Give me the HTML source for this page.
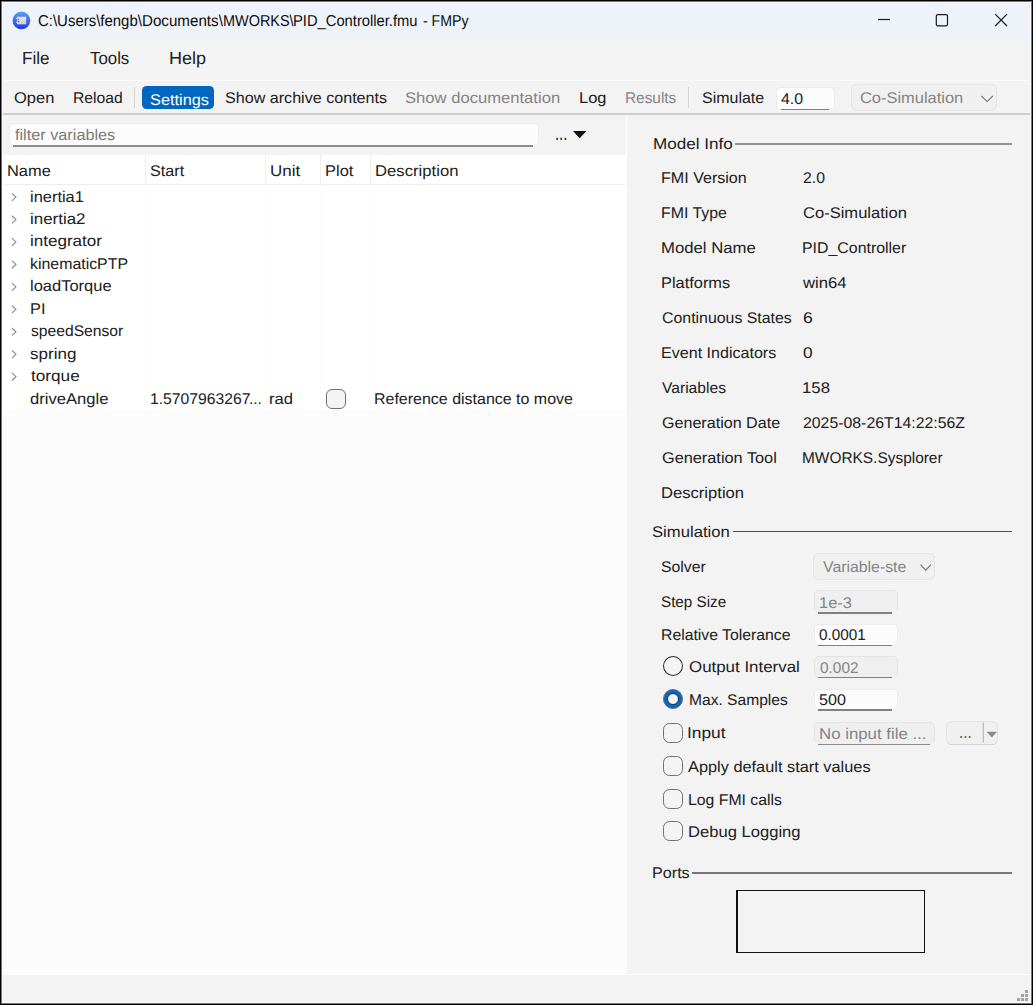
<!DOCTYPE html>
<html><head><meta charset="utf-8"><title>FMPy</title>
<style>
html,body{margin:0;padding:0}
body{width:1033px;height:1005px;position:relative;overflow:hidden;background:#f3f3f3;font-family:"Liberation Sans",sans-serif;color:#202020}
.a{position:absolute;box-sizing:border-box}
.t{position:absolute;white-space:pre;line-height:1;transform-origin:0 0;text-rendering:geometricPrecision}
.inp{position:absolute;box-sizing:border-box;border:1px solid #ececec;border-bottom:none;border-radius:5px;background:#fcfcfc}
.inp:after{content:"";position:absolute;left:3.3px;right:4.3px;bottom:-1.5px;height:1.5px;background:#808080}
.inp.thin:after{height:1.1px;bottom:-1.1px;background:#8a8a8a}
.inp.filt:after{height:1.7px;bottom:-1.7px;background:#8a8a8a}
.inp.dis{background:#efefef;border-color:#e4e4e4}
.cmb{position:absolute;box-sizing:border-box;border:1px solid #e5e5e5;border-radius:5.5px;background:#f0f0f0}
.cb{position:absolute;box-sizing:border-box;width:20.4px;height:20.3px;border:1.4px solid #707070;border-radius:6.5px;background:#f4f4f4}
.rb{position:absolute;box-sizing:border-box;width:20px;height:20.2px;border:1.4px solid #2c2c2c;border-radius:50%;background:#f4f4f4}
.hl{position:absolute;height:2px;background:#8e8e8e}
svg{position:absolute;overflow:visible}
</style></head><body>
<!-- title bar -->
<div class="a" style="left:0;top:0;width:1033px;height:39px;background:#eef3fa"></div>
<svg style="left:0;top:0" width="40" height="40" viewBox="0 0 40 40">
<defs><linearGradient id="g" x1="0" y1="0" x2="0" y2="1"><stop offset="0" stop-color="#5e9ff8"/><stop offset="0.5" stop-color="#3f6ef2"/><stop offset="1" stop-color="#2036ec"/></linearGradient>
<linearGradient id="g2" x1="0" y1="0" x2="0" y2="1"><stop offset="0" stop-color="#ebe9e3"/><stop offset="1" stop-color="#cdcdcd"/></linearGradient></defs>
<circle cx="21.4" cy="20.45" r="9.3" fill="#f6f7f9" opacity="0.7"/>
<circle cx="21.4" cy="20.45" r="8.85" fill="url(#g)"/>
<rect x="17.3" y="17" width="8.6" height="7" fill="url(#g2)" stroke="#efe9dc" stroke-width="0.5"/>
<rect x="16" y="18" width="2" height="0.9" fill="#dfe5f6"/><rect x="16" y="21.8" width="2" height="0.9" fill="#dfe5f6"/>
<circle cx="18.5" cy="19.3" r="0.8" fill="#3b5fe6"/><circle cx="18.5" cy="21.6" r="0.8" fill="#3b5fe6"/>
</svg>
<!-- window controls -->
<svg style="left:0;top:0" width="1033" height="40" fill="none" stroke="#1a1a1a" stroke-width="1.2">
<path d="M878 19.5H890"/>
<rect x="936.3" y="14.6" width="11.2" height="11.2" rx="1.6"/>
<path d="M995.2 14.2L1007 26M1007 14.2L995.2 26"/>
</svg>
<!-- menu/toolbar separator lines -->
<div class="a" style="left:0;top:80px;width:1033px;height:1px;background:#fafafa"></div>
<div class="a" style="left:0;top:113px;width:1033px;height:2px;background:#cdcdcd"></div>
<div class="a" style="left:134px;top:87px;width:1px;height:21px;background:#d6d6d6"></div>
<div class="a" style="left:688px;top:87px;width:1px;height:21px;background:#d6d6d6"></div>
<div class="a" style="left:141.9px;top:86.3px;width:72.6px;height:22.6px;background:#0067c0;border-radius:4.5px;box-shadow:0 0 0 1px #f8f5f3"></div>
<div class="inp" style="left:776.4px;top:87.3px;width:58.4px;height:21.4px"></div>
<div class="cmb" style="left:851px;top:84px;width:146px;height:27px"></div>
<svg style="left:981px;top:95px" width="13" height="8" fill="none" stroke="#767676" stroke-width="1.1"><path d="M0.4 1L6.1 6.6L11.8 1"/></svg>
<!-- left pane -->
<div class="a" style="left:2px;top:155px;width:624px;height:819px;background:#fcfcfc"></div>
<div class="a" style="left:2px;top:155px;width:625px;height:255px;background:#ffffff"></div>
<div class="inp filt" style="left:8.5px;top:123.3px;width:530px;height:21.8px"></div>
<svg style="left:0;top:0" width="640" height="160"><path d="M573 131H586.4L579.7 138.2Z" fill="#111"/></svg>
<div class="a" style="left:145px;top:185px;width:1px;height:225px;background:#fbfbfb"></div>
<div class="a" style="left:265px;top:185px;width:1px;height:225px;background:#fbfbfb"></div>
<div class="a" style="left:320px;top:185px;width:1px;height:225px;background:#fbfbfb"></div>
<div class="a" style="left:370px;top:185px;width:1px;height:225px;background:#fbfbfb"></div>
<div class="a" style="left:2px;top:184px;width:623px;height:1px;background:#eeeeee"></div>
<div class="a" style="left:145px;top:155px;width:1px;height:29px;background:#eeeeee"></div>
<div class="a" style="left:265px;top:155px;width:1px;height:29px;background:#eeeeee"></div>
<div class="a" style="left:320px;top:155px;width:1px;height:29px;background:#eeeeee"></div>
<div class="a" style="left:370px;top:155px;width:1px;height:29px;background:#eeeeee"></div>
<svg style="left:0;top:0" width="40" height="420" fill="none" stroke="#8a8a8a" stroke-width="1.1">
<path d="M11.9 193.30L16.0 197.10L11.9 200.90"/>
<path d="M11.9 215.75L16.0 219.55L11.9 223.35"/>
<path d="M11.9 238.20L16.0 242.00L11.9 245.80"/>
<path d="M11.9 260.65L16.0 264.45L11.9 268.25"/>
<path d="M11.9 283.10L16.0 286.90L11.9 290.70"/>
<path d="M11.9 305.55L16.0 309.35L11.9 313.15"/>
<path d="M11.9 328.00L16.0 331.80L11.9 335.60"/>
<path d="M11.9 350.45L16.0 354.25L11.9 358.05"/>
<path d="M11.9 372.90L16.0 376.70L11.9 380.50"/>
</svg>
<div class="cb" style="left:325.5px;top:388.8px;width:20.5px;height:20.2px;border-radius:6px;background:#f4f4f4"></div>
<div class="a" style="left:626px;top:115px;width:1px;height:859px;background:#fbfbfb"></div>
<!-- right pane -->
<div class="hl" style="left:735px;top:143px;width:277px;background:#939393"></div>
<div class="hl" style="left:732.5px;top:530.6px;width:279.5px;height:1.2px;background:#4e4e4e"></div>
<div class="hl" style="left:692.1px;top:871.7px;width:320px;height:1.9px;background:#787878"></div>
<div class="cmb" style="left:813.4px;top:553px;width:122px;height:26.8px"></div>
<svg style="left:920px;top:564px" width="13" height="8" fill="none" stroke="#767676" stroke-width="1.1"><path d="M0.5 0.7L5.75 6.1L11 0.7"/></svg>
<div class="inp dis" style="left:813.8px;top:590.4px;width:83.8px;height:21.9px"></div>
<div class="inp" style="left:813.8px;top:623.5px;width:83.8px;height:21.4px"></div>
<div class="inp dis" style="left:813.8px;top:655.9px;width:83.8px;height:21.1px"></div>
<div class="inp" style="left:813.8px;top:688.5px;width:83.8px;height:20.8px"></div>
<div class="inp dis thin" style="left:813.6px;top:721.5px;width:121.4px;height:22.2px"></div>
<div class="cmb" style="left:946.3px;top:720.9px;width:52.2px;height:23.8px;border-bottom-color:#d4d4d4"></div>
<div class="rb" style="left:663.2px;top:656.2px"></div>
<div class="rb" style="left:663.3px;top:688.9px;height:19.9px;width:19.9px;border:1px solid #6e6e6e;background:#0467c2"></div>
<div class="a" style="left:667.1px;top:692.7px;width:12.3px;height:12.3px;border-radius:50%;border:1.2px solid #0b2d5e;background:#f5f5f5"></div>
<div class="cb" style="left:663px;top:722.5px"></div>
<div class="cb" style="left:663px;top:756.1px"></div>
<div class="cb" style="left:663px;top:788.7px"></div>
<div class="cb" style="left:663px;top:821.2px"></div>
<svg style="left:0;top:0" width="1033" height="760"><rect x="982.8" y="722.5" width="1" height="20" fill="#b0b0b0"/><path d="M986.6 731.8H997.1L991.85 737.4Z" fill="#8a8a8a"/></svg>
<div class="a" style="left:736px;top:890px;width:189px;height:63px;border:1px solid #111;border-left-width:2px"></div>
<!-- status bar -->
<div class="a" style="left:0;top:974px;width:1033px;height:1px;background:#ffffff"></div>
<svg style="left:0;top:0" width="1033" height="1005" fill="#a3a3a3">
<rect x="1025" y="990" width="3" height="3"/><rect x="1021" y="994" width="3" height="3"/><rect x="1025" y="994" width="3" height="3"/>
<rect x="1017" y="998" width="3" height="3"/><rect x="1021" y="998" width="3" height="3"/><rect x="1025" y="998" width="3" height="3"/>
</svg>
<span class="t" style="left:37.64px;top:14px;font-size:15.8px;transform:scaleX(0.9465);color:#0c0c0c">C:\Users\fengb\</span><span class="t" style="left:141.89px;top:14px;font-size:15.8px;transform:scaleX(0.9592);color:#0c0c0c">Documents\</span><span class="t" style="left:223.04px;top:14px;font-size:15.8px;transform:scaleX(0.9140);color:#0c0c0c">MWORKS\</span><span class="t" style="left:293.32px;top:14px;font-size:15.8px;transform:scaleX(0.9330);color:#0c0c0c">PID_Controller.fmu</span><span class="t" style="left:419.31px;top:14px;font-size:15.8px;transform:scaleX(0.8963);color:#0c0c0c"> - FMPy</span>
<span class="t" style="left:21.89px;top:50px;font-size:17.4px;transform:scaleX(0.9813)">File</span>
<span class="t" style="left:90.12px;top:50px;font-size:17.4px;transform:scaleX(0.9676)">Tools</span>
<span class="t" style="left:168.61px;top:50px;font-size:17.4px;transform:scaleX(1.0363)">Help</span>
<span class="t" style="left:13.58px;top:91px;font-size:15.5px;transform:scaleX(1.0639)">Open</span>
<span class="t" style="left:72.66px;top:91px;font-size:15.5px;transform:scaleX(1.0124)">Reload</span>
<span class="t" style="left:149.75px;top:93px;font-size:15.5px;transform:scaleX(1.0525);color:#ffffff">Settings</span>
<span class="t" style="left:225.46px;top:91px;font-size:15.5px;transform:scaleX(1.0392)">Show archive contents</span>
<span class="t" style="left:405.33px;top:91px;font-size:15.5px;transform:scaleX(1.0717);color:#848484">Show documentation</span>
<span class="t" style="left:578.70px;top:91px;font-size:15.5px;transform:scaleX(1.0618)">Log</span>
<span class="t" style="left:624.98px;top:91px;font-size:15.5px;transform:scaleX(0.9921);color:#848484">Results</span>
<span class="t" style="left:702.07px;top:91px;font-size:15.5px;transform:scaleX(1.0303)">Simulate</span>
<span class="t" style="left:781.33px;top:92px;font-size:15.5px;transform:scaleX(1.0247)">4.0</span>
<span class="t" style="left:860.16px;top:91px;font-size:15.5px;transform:scaleX(1.0607);color:#848484">Co-Simulation</span>
<span class="t" style="left:14.65px;top:128px;font-size:15.5px;transform:scaleX(1.0482);color:#7a7a7a">filter variables</span>
<span class="t" style="left:6.50px;top:164px;font-size:15.5px;transform:scaleX(1.0584)">Name</span>
<span class="t" style="left:150.16px;top:164px;font-size:15.5px;transform:scaleX(1.0423)">Start</span>
<span class="t" style="left:269.91px;top:164px;font-size:15.5px;transform:scaleX(1.0932)">Unit</span>
<span class="t" style="left:325.00px;top:164px;font-size:15.5px;transform:scaleX(1.0615)">Plot</span>
<span class="t" style="left:374.78px;top:164px;font-size:15.5px;transform:scaleX(1.0763)">Description</span>
<span class="t" style="left:30.18px;top:190px;font-size:15.5px;transform:scaleX(1.0594)">inertia1</span>
<span class="t" style="left:30.14px;top:212px;font-size:15.5px;transform:scaleX(1.0921)">inertia2</span>
<span class="t" style="left:30.13px;top:234px;font-size:15.5px;transform:scaleX(1.0993)">integrator</span>
<span class="t" style="left:30.23px;top:257px;font-size:15.5px;transform:scaleX(1.0252)">kinematicPTP</span>
<span class="t" style="left:30.17px;top:279px;font-size:15.5px;transform:scaleX(1.0635)">loadTorque</span>
<span class="t" style="left:30.00px;top:302px;font-size:15.5px;transform:scaleX(1.0587)">PI</span>
<span class="t" style="left:30.52px;top:324px;font-size:15.5px;transform:scaleX(1.0097)">speedSensor</span>
<span class="t" style="left:30.45px;top:347px;font-size:15.5px;transform:scaleX(1.0979)">spring</span>
<span class="t" style="left:30.84px;top:369px;font-size:15.5px;transform:scaleX(1.1083)">torque</span>
<span class="t" style="left:30.40px;top:392px;font-size:15.5px;transform:scaleX(1.0709)">driveAngle</span>
<span class="t" style="left:150.02px;top:392px;font-size:15.5px;transform:scaleX(1.0131)">1.5707963267</span><span class="t" style="left:249.46px;top:392px;font-size:15.5px;transform:scaleX(0.9998)">...</span>
<span class="t" style="left:269.06px;top:392px;font-size:15.5px;transform:scaleX(1.0723)">rad</span>
<span class="t" style="left:374.14px;top:392px;font-size:15.5px;transform:scaleX(1.0306)">Reference distance to move</span>
<span class="t" style="left:652.55px;top:137px;font-size:15.5px;transform:scaleX(1.1029)">Model Info</span>
<span class="t" style="left:661.43px;top:171px;font-size:15.5px;transform:scaleX(1.0368)">FMI Version</span>
<span class="t" style="left:802.72px;top:171px;font-size:15.5px;transform:scaleX(1.0205)">2.0</span>
<span class="t" style="left:661.44px;top:206px;font-size:15.5px;transform:scaleX(1.0242)">FMI Type</span>
<span class="t" style="left:802.65px;top:206px;font-size:15.5px;transform:scaleX(1.0670)">Co-Simulation</span>
<span class="t" style="left:661.38px;top:241px;font-size:15.5px;transform:scaleX(1.0784)">Model Name</span>
<span class="t" style="left:802.34px;top:241px;font-size:15.5px;transform:scaleX(1.0256)">PID_Controller</span>
<span class="t" style="left:661.40px;top:276px;font-size:15.5px;transform:scaleX(1.0574)">Platforms</span>
<span class="t" style="left:803.39px;top:276px;font-size:15.5px;transform:scaleX(1.0761)">win64</span>
<span class="t" style="left:661.79px;top:311px;font-size:15.5px;transform:scaleX(1.0245)">Continuous States</span>
<span class="t" style="left:802.61px;top:311px;font-size:15.5px;transform:scaleX(1.1343)">6</span>
<span class="t" style="left:661.43px;top:346px;font-size:15.5px;transform:scaleX(1.0369)">Event Indicators</span>
<span class="t" style="left:802.74px;top:346px;font-size:15.5px;transform:scaleX(1.1126)">0</span>
<span class="t" style="left:662.27px;top:381px;font-size:15.5px;transform:scaleX(1.0073)">Variables</span>
<span class="t" style="left:802.34px;top:381px;font-size:15.5px;transform:scaleX(1.0833)">158</span>
<span class="t" style="left:661.78px;top:416px;font-size:15.5px;transform:scaleX(1.0382)">Generation Date</span>
<span class="t" style="left:802.72px;top:416px;font-size:15.5px;transform:scaleX(1.0217)">2025-08-26T14:22:56Z</span>
<span class="t" style="left:661.77px;top:451px;font-size:15.5px;transform:scaleX(1.0516)">Generation Tool</span>
<span class="t" style="left:802.38px;top:451px;font-size:15.5px;transform:scaleX(0.9952)">MWORKS.Sysplorer</span>
<span class="t" style="left:661.39px;top:486px;font-size:15.5px;transform:scaleX(1.0710)">Description</span>
<span class="t" style="left:652.12px;top:525px;font-size:15.5px;transform:scaleX(1.0740)">Simulation</span>
<span class="t" style="left:661.28px;top:560px;font-size:15.5px;transform:scaleX(1.0206)">Solver</span>
<span class="t" style="left:661.33px;top:595px;font-size:15.5px;transform:scaleX(0.9811)">Step Size</span>
<span class="t" style="left:819.07px;top:596px;font-size:15.5px;transform:scaleX(1.0588);color:#848484">1e-3</span>
<span class="t" style="left:661.25px;top:628px;font-size:15.5px;transform:scaleX(1.0181)">Relative Tolerance</span>
<span class="t" style="left:819.14px;top:628px;font-size:15.5px;transform:scaleX(0.9871)">0.0001</span>
<span class="t" style="left:688.86px;top:660px;font-size:15.5px;transform:scaleX(1.0897)">Output Interval</span>
<span class="t" style="left:819.54px;top:661px;font-size:15.5px;transform:scaleX(0.9927);color:#848484">0.002</span>
<span class="t" style="left:689.07px;top:693px;font-size:15.5px;transform:scaleX(1.0056)">Max. Samples</span>
<span class="t" style="left:819.27px;top:693px;font-size:15.5px;transform:scaleX(1.0388)">500</span>
<span class="t" style="left:687.47px;top:726px;font-size:15.5px;transform:scaleX(1.1189)">Input</span>
<span class="t" style="left:819.47px;top:727px;font-size:15.5px;transform:scaleX(1.0842);color:#848484">No input file ...</span>
<span class="t" style="left:687.77px;top:760px;font-size:15.5px;transform:scaleX(1.0541)">Apply default start values</span>
<span class="t" style="left:687.85px;top:793px;font-size:15.5px;transform:scaleX(1.0193)">Log FMI calls</span>
<span class="t" style="left:687.79px;top:825px;font-size:15.5px;transform:scaleX(1.0700)">Debug Logging</span>
<span class="t" style="left:652.12px;top:866px;font-size:15.5px;transform:scaleX(1.0418)">Ports</span>
<span class="t" style="left:823.46px;top:560px;font-size:15.5px;transform:scaleX(1.0214);color:#848484">Variable-ste</span>
<span class="t" style="left:554.51px;top:123px;font-size:21px;transform:scaleX(0.7067);color:#1a1a1a">...</span>
<span class="t" style="left:958.72px;top:723px;font-size:19px;transform:scaleX(0.8081);color:#5a5a5a">...</span>
<!-- window border -->
<div class="a" style="left:0;top:0;width:1033px;height:1005px;border:1px solid #000"></div>
<div class="a" style="left:1px;top:1px;width:1031px;height:1003px;border:1px solid #747474"></div>
<div class="a" style="left:2px;top:2px;width:1029px;height:1001px;border:1px solid #fbfbfb;border-top-color:#f5f9fc"></div>
</body></html>
